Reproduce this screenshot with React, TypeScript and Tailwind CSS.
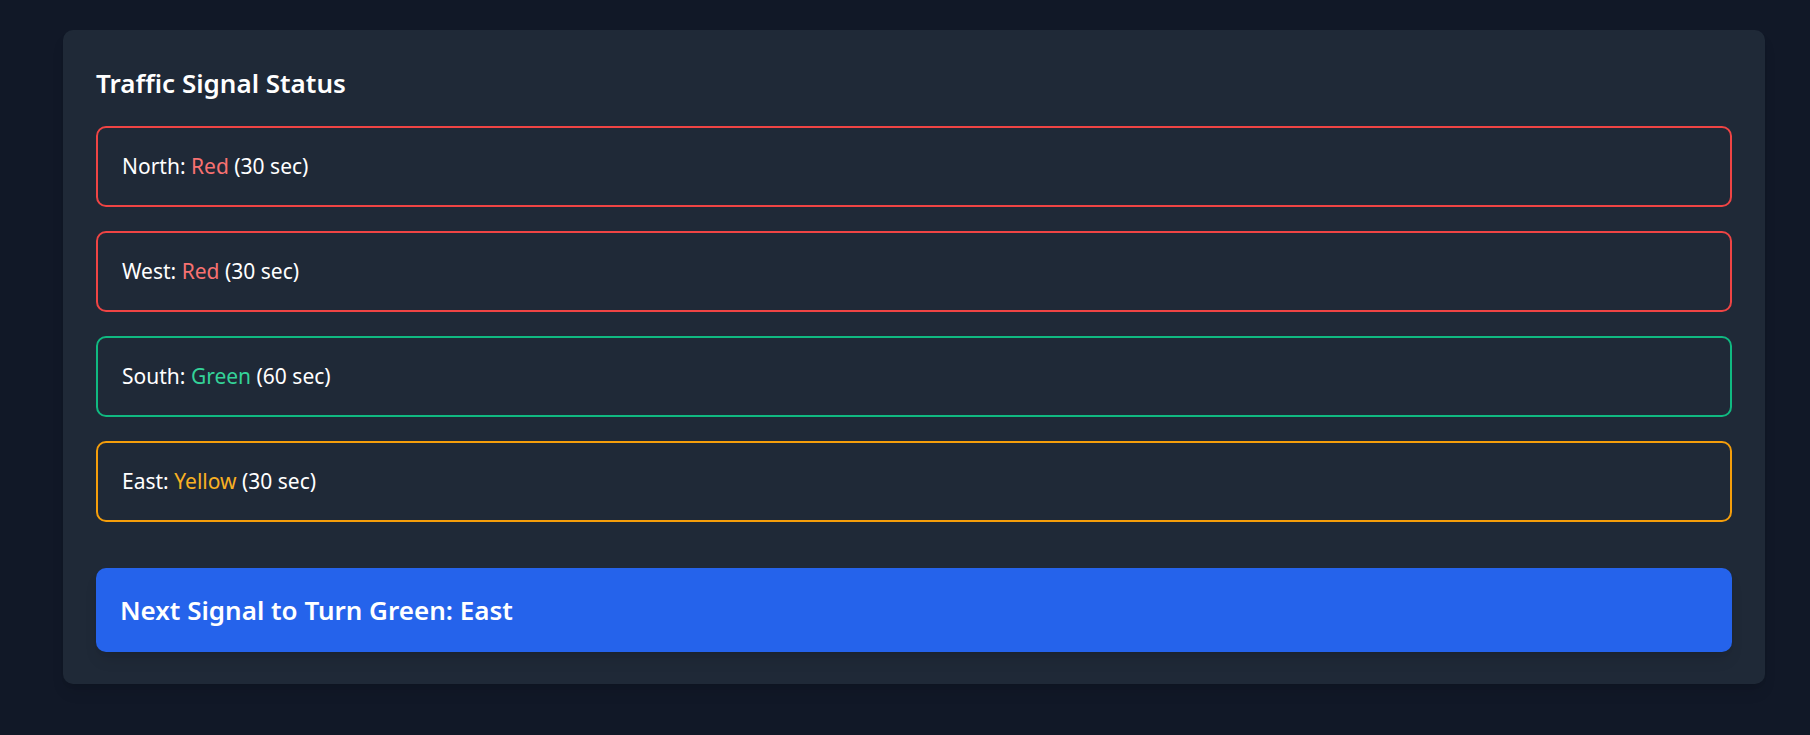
import React from "react";

const rows = [
  { dir: "North", state: "Red", secs: 30, border: "border-[#ef4444]", text: "text-[#f87171]" },
  { dir: "West", state: "Red", secs: 30, border: "border-[#ef4444]", text: "text-[#f87171]" },
  { dir: "South", state: "Green", secs: 60, border: "border-[#10b981]", text: "text-[#34d399]" },
  { dir: "East", state: "Yellow", secs: 30, border: "border-[#f59e0b]", text: "text-[#f9b023]" },
];

export default function App() {
  return (
    <div
      className="min-h-screen bg-[#111827] pt-[30px] pl-[63px] pr-[45px] pb-[52px]"
      style={{ fontFamily: '"Noto Sans", "Open Sans", sans-serif' }}
    >
      <div className="bg-[#1f2937] rounded-[10px] shadow-lg px-[33px] pt-[35px] pb-[32px]">
        <h2 className="text-[26px] leading-[36px] font-semibold text-white mb-[25px]">
          Traffic Signal Status
        </h2>
        <div className="flex flex-col gap-[24px]">
          {rows.map((r) => (
            <div
              key={r.dir}
              className={`h-[81px] border-2 ${r.border} rounded-[10px] px-[24px] flex items-center text-[21px] text-white`}
            >
              <span>
                {r.dir}: <span className={r.text}>{r.state}</span> ({r.secs} sec)
              </span>
            </div>
          ))}
        </div>
        <div className="mt-[46px] h-[84px] bg-[#2563eb] rounded-[10px] shadow-lg px-[24px] flex items-center">
          <span className="text-[26px] font-semibold text-white">
            Next Signal to Turn Green: East
          </span>
        </div>
      </div>
    </div>
  );
}
